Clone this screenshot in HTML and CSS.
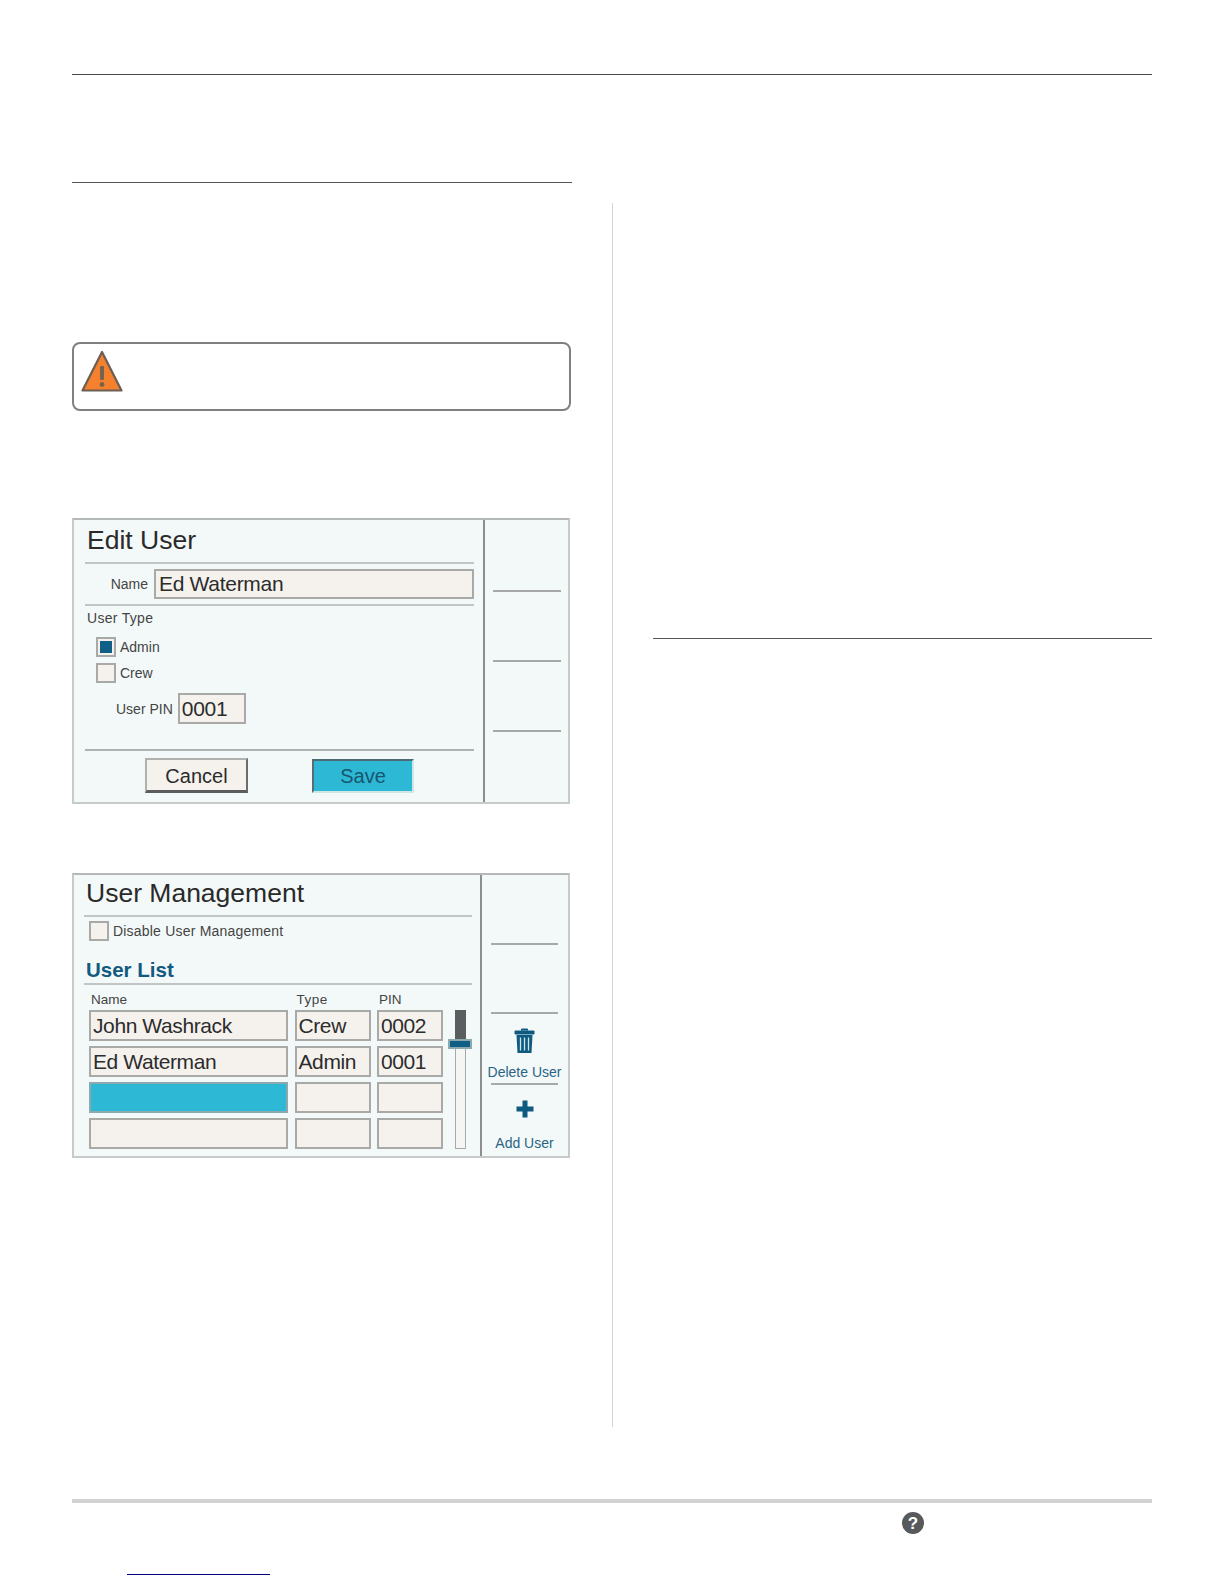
FILE: index.html
```html
<!DOCTYPE html>
<html lang="en">
<head>
<meta charset="utf-8">
<title>User Management</title>
<link rel="stylesheet" href="styles.css">
</head>
<body>
<div class="page">
  <div class="top-rule"></div>
  <div class="columns">
    <div class="col-left">
      <div class="rule heading-rule"></div>
      <div class="alert">
        <svg class="warn" viewBox="0 0 42 42" width="42" height="42"><path d="M21 2 L40.5 40.5 H1.5 Z" fill="#f5802e" stroke="#6b5f55" stroke-width="2.2" stroke-linejoin="round"/><rect x="19" y="16" width="4" height="14" rx="1" fill="#77614f"/><circle cx="21" cy="34.5" r="2.4" fill="#77614f"/></svg>
      </div>

      <section class="screen edit-screen">
        <div class="main">
          <div class="title">Edit User</div>
          <div class="sep"></div>
          <div class="name-row"><span class="lbl">Name</span><div class="field name-field">Ed Waterman</div></div>
          <div class="sep"></div>
          <div class="lbl type-label">User Type</div>
          <div class="check-row"><span class="check"><i class="dot"></i></span><span class="lbl">Admin</span></div>
          <div class="check-row crew-row"><span class="check"></span><span class="lbl">Crew</span></div>
          <div class="pin-row"><span class="lbl">User PIN</span><div class="field pin-field">0001</div></div>
          <div class="sep bottom-sep"></div>
          <div class="buttons">
            <div class="btn cancel">Cancel</div>
            <div class="btn save">Save</div>
          </div>
        </div>
        <div class="side side-edit">
          <div class="side-line"></div>
          <div class="side-line"></div>
          <div class="side-line"></div>
        </div>
      </section>

      <section class="screen user-screen">
        <div class="main main-user">
          <div class="title title-um">User Management</div>
          <div class="sep"></div>
          <div class="disable-row"><span class="check"></span><span class="lbl disable-label">Disable User Management</span></div>
          <div class="list-title">User List</div>
          <div class="sep"></div>
          <div class="list">
            <div class="grid">
              <div class="head head-name">Name</div><div class="head head-type">Type</div><div class="head">PIN</div>
              <div class="field cell">John Washrack</div><div class="field cell">Crew</div><div class="field cell">0002</div>
              <div class="field cell">Ed Waterman</div><div class="field cell">Admin</div><div class="field cell">0001</div>
              <div class="field cell selected"></div><div class="field cell"></div><div class="field cell"></div>
              <div class="field cell"></div><div class="field cell"></div><div class="field cell"></div>
            </div>
            <div class="scroll">
              <div class="track"><div class="fill"></div></div>
              <div class="thumb"></div>
            </div>
          </div>
        </div>
        <div class="side side-user">
          <div class="side-line first"></div>
          <div class="side-line second"></div>
          <div class="action delete">
            <svg class="icon" viewBox="0 0 20 26" width="21" height="26"><path d="M7 2.5 V1 H13 V2.5 M0.5 3 H19.5 V6 H0.5 Z" fill="#0f5a80" stroke="#0f5a80" stroke-width="1"/><path d="M2 7 H18 L17 25 H3 Z" fill="#0f5a80"/><path d="M6 9.5 V22.5 M10 9.5 V22.5 M14 9.5 V22.5" stroke="#d5e6ea" stroke-width="1.3"/></svg>
            <span class="action-label">Delete User</span>
          </div>
          <div class="side-line third"></div>
          <div class="action add">
            <svg class="icon" viewBox="0 0 18 18" width="18" height="18"><path d="M6.5 0.5 H11.5 V6.5 H17.5 V11.5 H11.5 V17.5 H6.5 V11.5 H0.5 V6.5 H6.5 Z" fill="#0f5a80"/></svg>
            <span class="action-label">Add User</span>
          </div>
        </div>
      </section>
    </div>
    <div class="divider"></div>
    <div class="col-right">
      <div class="rule right-rule"></div>
    </div>
  </div>
  <footer class="footer">
    <div class="footer-bar"></div>
    <div class="footer-icon">
      <svg viewBox="0 0 22 22" width="22" height="22"><circle cx="11" cy="11" r="11" fill="#58595b"/><text x="11" y="17" text-anchor="middle" class="q">?</text></svg>
    </div>
    <div class="footer-link"></div>
  </footer>
</div>
</body>
</html>
```

FILE: styles.css
```css
* { box-sizing: border-box; }
html, body { margin: 0; padding: 0; background: #fff; }
body { font-family: "Liberation Sans", Arial, sans-serif; color: #2b2b2b; }
.page { width: 1224px; height: 1584px; padding: 74px 72px 0; overflow: hidden; }
.top-rule { height: 1px; background: #4a4a4a; }
.columns { display: flex; margin-top: 107px; height: 1245px; }
.col-left { width: 540px; }
.divider { width: 1px; margin-top: 21px; background: #d4d4d4; }
.col-right { flex: 1; padding-left: 40px; }
.rule { height: 1px; background: #555; }
.heading-rule { width: 500px; }
.right-rule { margin-top: 456px; }
.alert { width: 499px; height: 69px; margin-top: 159px; border: 2px solid #808080; border-radius: 8px; padding: 6px 0 0 7px; }
.warn { display: block; }
.screen { width: 498px; height: 285px; display: flex; background: #f3f9f8; border: 2px solid #c6cbc9; border-top-color: #b4b8b6; }
.edit-screen { margin-top: 107px; height: 286px; }
.user-screen { margin-top: 69px; }
.main { width: 411px; padding: 0 9px 0 11px; border-right: 2px solid #8d8f8e; }
.main-user { width: 408px; padding: 1px 8px 0 10px; }
.title { font-size: 26.5px; line-height: 40px; padding-bottom: 2px; padding-left: 2px; color: #2a2a2a; }
.title-um { line-height: 35px; padding-bottom: 4px; }
.sep { height: 2px; background: #c2c5c3; }
.lbl { font-size: 14px; color: #444; }
.field { background: #f5f2ee; border: 2px solid #a9aaa8; font-size: 21px; color: #2c2c2c; letter-spacing: -0.3px; }
.name-row { display: flex; align-items: center; justify-content: flex-end; gap: 6px; height: 40px; padding-bottom: 1px; }
.name-field { width: 320px; height: 30px; line-height: 26px; padding-left: 3px; }
.type-label { padding-left: 2px; margin-top: 3px; line-height: 18px; letter-spacing: 0.3px; }
.check-row { display: flex; align-items: center; gap: 4px; padding-left: 11px; margin-top: 10px; }
.crew-row { margin-top: 6px; }
.check { display: flex; align-items: center; justify-content: center; width: 20px; height: 20px; background: #f5f2ee; border: 2px solid #a9aaa8; flex: none; }
.dot { display: block; width: 12px; height: 12px; background: #0f5f86; }
.pin-row { display: flex; align-items: center; gap: 5px; padding-left: 31px; margin-top: 10px; }
.pin-field { width: 68px; height: 31px; line-height: 27px; padding-left: 2px; }
.bottom-sep { margin-top: 25px; background: #b0b2b0; }
.buttons { display: flex; padding-left: 60px; margin-top: 7px; gap: 64px; align-items: flex-start; }
.btn { width: 103px; height: 35px; font-size: 20px; line-height: 32px; text-align: center; }
.cancel { background: #f5f2ee; border: 2px solid #b0b1af; border-right-color: #6c6c6c; border-bottom: 3px solid #5c5c5c; }
.save { background: #2db8d6; color: #17566f; border: 2px solid #cfe6e6; border-left-color: #5a6d72; border-top-color: #4c6a72; width: 102px; height: 34px; margin-top: 1px; line-height: 30px; }
.side { flex: 1; min-width: 0; display: flex; flex-direction: column; }
.side-line { height: 2px; background: #a7a9a8; }
.side-edit { padding: 70px 7px 0 8px; gap: 68px; }
.side-user { padding: 68px 10px 0 9px; align-items: stretch; }
.side-user .second { margin-top: 67px; }
.action { display: flex; flex-direction: column; align-items: center; }
.action-label { font-size: 14px; color: #2a6484; white-space: nowrap; }
.delete { margin-top: 14px; height: 55px; }
.delete .action-label { margin-top: 9px; line-height: 18px; }
.add { margin-top: 15px; }
.add .action-label { margin-top: 16px; line-height: 18px; }
.disable-row { display: flex; align-items: center; gap: 4px; padding-left: 5px; margin-top: 3px; height: 22px; }
.disable-label { letter-spacing: 0.2px; }
.list-title { font-size: 20.5px; font-weight: bold; color: #125a80; padding-left: 2px; margin-top: 15px; line-height: 26px; }
.list { display: flex; padding-left: 5px; }
.grid { display: grid; grid-template-columns: 199px 76px 66px; column-gap: 6.5px; row-gap: 5px; grid-template-rows: 13px repeat(4, 31px); margin-top: 7px; }
.head { font-size: 13.5px; line-height: 15px; color: #444; padding-left: 2px; align-self: start; }
.head-type { letter-spacing: 0.5px; }
.cell { line-height: 27px; padding-left: 2px; overflow: hidden; white-space: nowrap; letter-spacing: -0.4px; }
.selected { background: #2db8d6; border-color: #8ea9ae; }
.scroll { position: relative; width: 24px; margin: 24px 0 0 5px; height: 140px; }
.track { position: absolute; left: 7px; top: 1px; width: 11px; height: 139px; background: #f5f6f3; border: 1px solid #a9aaa8; }
.fill { height: 31px; background: #5b5e60; margin: -1px; }
.thumb { position: absolute; left: 0; top: 30px; width: 24px; height: 10px; background: #0f5f86; border: 2px solid #8fa8ad; }
.footer { position: relative; }
.footer-bar { height: 4px; background: #d2d2d2; margin-top: 72px; }
.footer-icon { position: absolute; left: 830px; top: 13px; width: 22px; height: 22px; }
.footer-icon svg { display: block; }
.q { font-family: "Liberation Sans", Arial, sans-serif; font-size: 17px; font-weight: bold; fill: #fff; }
.footer-link { position: absolute; left: 55px; top: 75px; width: 143px; height: 1px; background: #00007a; }
```
